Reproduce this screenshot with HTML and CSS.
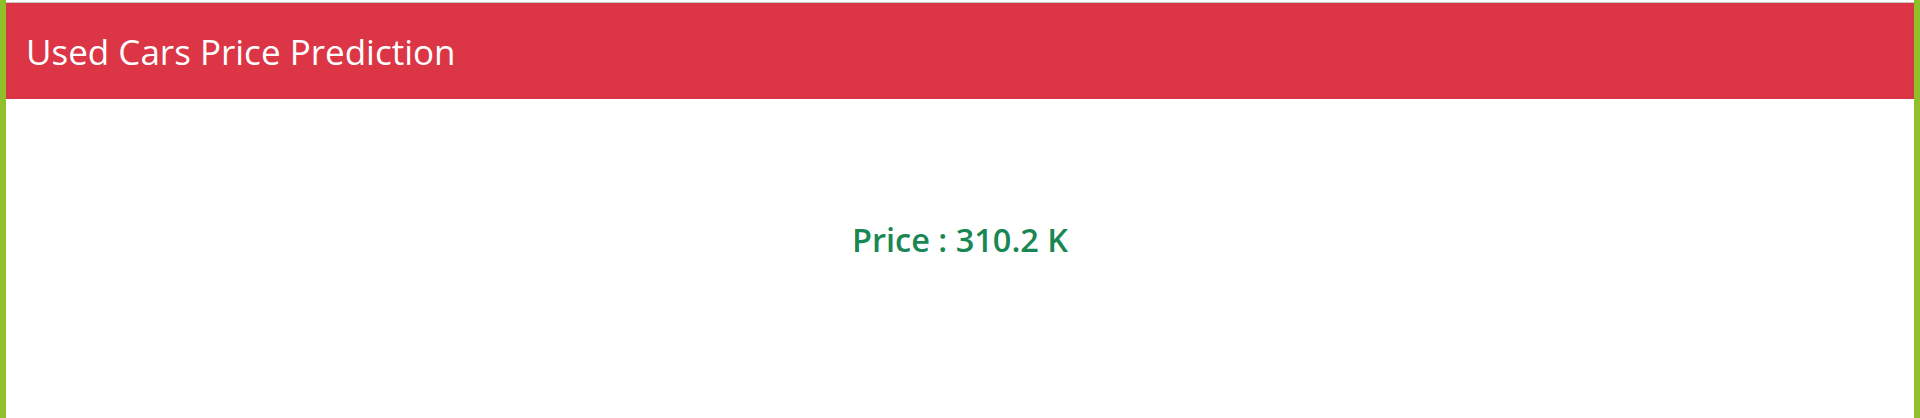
FILE: index.html
```html
<!DOCTYPE html>
<html>
<head>
<meta charset="utf-8">
<link rel="stylesheet" href="styles.css">
</head>
<body>
<div class="page">
  <header class="topbar">
    <h1 class="title">Used Cars Price Prediction</h1>
  </header>
  <main class="result">
    <p class="price">Price : 310.2 K</p>
  </main>
</div>
</body>
</html>
```
FILE: styles.css
```css
html, body {
  margin: 0;
  padding: 0;
  height: 100%;
  background: #ffffff;
}
.page {
  box-sizing: border-box;
  min-height: 100%;
  border-left: 6px solid #8dc02a;
  border-right: 6px solid #8dc02a;
  padding-top: 2px;
  font-family: "Open Sans", "Noto Sans", sans-serif;
}
.topbar {
  background: #dc3545;
  border-top: 1px solid #c8c8c8;
  height: 96px;
  display: flex;
  align-items: center;
  padding-left: 20px;
}
.title {
  margin: 0;
  color: #ffffff;
  font-weight: 400;
  font-size: 35px;
}
.result {
  display: flex;
  justify-content: center;
  padding-top: 118px;
}
.price {
  margin: 0;
  color: #198754;
  font-weight: 600;
  font-size: 32.5px;
}
```
